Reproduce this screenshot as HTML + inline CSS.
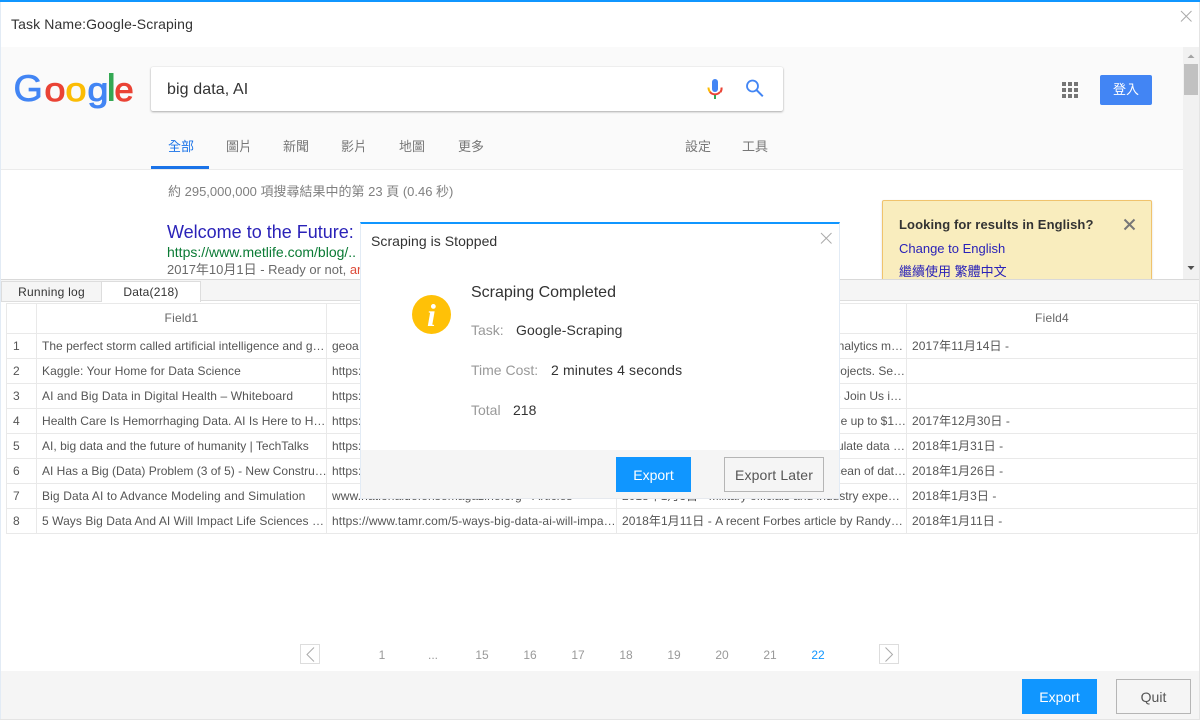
<!DOCTYPE html>
<html lang="zh-Hant">
<head>
<meta charset="utf-8">
<title>Task Name:Google-Scraping</title>
<style>
*{box-sizing:border-box}
html,body{margin:0;padding:0;width:1200px;height:720px;overflow:hidden;background:#fff}
body{font-family:"Liberation Sans","Noto Sans CJK TC",sans-serif;color:#333;position:relative}
.a{position:absolute;white-space:nowrap}
.tab{font-size:13px;color:#777;line-height:16px}
.cell{position:absolute;font-size:12px;line-height:25px;height:25px;color:#555;white-space:nowrap;overflow:hidden}
.ln{position:absolute;background:#e9e9e9}
.pg{position:absolute;top:647px;font-size:12px;line-height:16px;color:#999;width:30px;text-align:center}
.btn{position:absolute;font-size:14px;text-align:center}
</style>
</head>
<body>
<!-- window frame -->
<div class="a" style="left:0;top:0;width:1200px;height:2px;background:#1096ff"></div>
<div class="a" style="left:0;top:2px;width:1px;height:718px;background:#e2ebf5"></div>
<div class="a" style="left:1199px;top:2px;width:1px;height:718px;background:#e4e4e4"></div>
<div class="a" style="left:11px;top:16px;font-size:14px;line-height:17px;color:#333;letter-spacing:.12px">Task Name:Google-Scraping</div>
<svg class="a" style="left:1180px;top:10px" width="12" height="12" viewBox="0 0 12 12"><path d="M1 1l10.500 10.500M11.500 1L1 11.500" stroke="#aaa" stroke-width="1" fill="none"/></svg>

<!-- Google header -->
<div class="a" style="left:1px;top:47px;width:1182px;height:122px;background:#fafafa"></div>
<div class="a" style="left:1px;top:169px;width:1182px;height:1px;background:#ebebeb"></div>
<svg class="a" style="left:10px;top:65px" width="130" height="52" viewBox="0 0 130 52" font-family="Liberation Sans">
<text transform="translate(3.500 36) scale(1.02 1)" font-size="37" fill="#4285f4" stroke="#4285f4" stroke-width=".7">G</text>
<text transform="translate(34.500 36) scale(1.14 1)" font-size="33" fill="#ea4335" stroke="#ea4335" stroke-width="1">o</text>
<text transform="translate(55.500 36) scale(1.14 1)" font-size="33" fill="#fbbc05" stroke="#fbbc05" stroke-width="1">o</text>
<text transform="translate(77.500 36) scale(1.14 1)" font-size="33" fill="#4285f4" stroke="#4285f4" stroke-width="1">g</text>
<rect x="99" y="8" width="4.500" height="28" fill="#34a853"/>
<text transform="translate(104.500 36) scale(1.04 1)" font-size="33" fill="#ea4335" stroke="#ea4335" stroke-width="1">e</text>
</svg>
<div class="a" style="left:151px;top:67px;width:632px;height:44px;background:#fff;border-radius:2px;box-shadow:0 1px 2px rgba(0,0,0,.3),0 0 1px rgba(0,0,0,.15)"></div>
<div class="a" style="left:167px;top:80px;font-size:16px;line-height:19px;color:#333;letter-spacing:.1px">big data, AI</div>
<svg class="a" style="left:704px;top:76px" width="22" height="26" viewBox="0 0 22 26">
<rect x="8" y="3" width="6" height="13" rx="3" fill="#4285f4"/>
<path d="M4.500 11.500a6.500 6.500 0 0 0 2.200 5" stroke="#fbbc05" stroke-width="2" fill="none"/>
<path d="M6 16a6.500 6.500 0 0 0 10 0" stroke="#ea4335" stroke-width="2" fill="none"/>
<path d="M16.400 16.200a6.500 6.500 0 0 0 1.100-4.700" stroke="#ea4335" stroke-width="2" fill="none"/>
<rect x="10" y="19" width="2" height="4" fill="#34a853"/>
</svg>
<svg class="a" style="left:743px;top:77px" width="22" height="22" viewBox="0 0 22 22"><circle cx="9.500" cy="9" r="5.500" stroke="#4285f4" stroke-width="1.800" fill="none"/><path d="M13.500 13l6.300 6.300" stroke="#4285f4" stroke-width="2"/></svg>
<svg class="a" style="left:1062px;top:82px" width="17" height="17" viewBox="0 0 17 17" fill="#757575">
<rect x="0" y="0" width="4" height="4"/><rect x="6" y="0" width="4" height="4"/><rect x="12" y="0" width="4" height="4"/>
<rect x="0" y="6" width="4" height="4"/><rect x="6" y="6" width="4" height="4"/><rect x="12" y="6" width="4" height="4"/>
<rect x="0" y="12" width="4" height="4"/><rect x="6" y="12" width="4" height="4"/><rect x="12" y="12" width="4" height="4"/>
</svg>
<div class="a" style="left:1100px;top:75px;width:52px;height:30px;background:#4285f4;border-radius:2px;color:#fff;font-size:13px;line-height:30px;text-align:center">登入</div>

<div class="a tab" style="left:168px;top:139px;color:#1a73e8">全部</div>
<div class="a" style="left:151px;top:166px;width:58px;height:3px;background:#1a73e8"></div>
<div class="a tab" style="left:226px;top:139px">圖片</div>
<div class="a tab" style="left:283px;top:139px">新聞</div>
<div class="a tab" style="left:341px;top:139px">影片</div>
<div class="a tab" style="left:399px;top:139px">地圖</div>
<div class="a tab" style="left:458px;top:139px">更多</div>
<div class="a tab" style="left:685px;top:139px">設定</div>
<div class="a tab" style="left:742px;top:139px">工具</div>

<!-- scrollbar -->
<div class="a" style="left:1183px;top:47px;width:16px;height:232px;background:#f1f1f1"></div>
<div class="a" style="left:1184px;top:64px;width:14px;height:31px;background:#c1c1c1"></div>
<svg class="a" style="left:1183px;top:47px" width="16" height="232"><path d="M4.500 11L8 7.500 11.500 11z" fill="#a3a3a3"/><path d="M4.500 219h7L8 223z" fill="#505050"/></svg>

<!-- Google results -->
<div class="a" style="left:168px;top:184px;font-size:13px;line-height:16px;color:#808080">約 295,000,000 項搜尋結果中的第 23 頁 (0.46 秒)</div>
<div class="a" style="left:167px;top:222px;font-size:18px;line-height:20px;color:#2a22b8">Welcome to the Future: Big Data</div>
<div class="a" style="left:167px;top:244px;font-size:14px;line-height:17px;color:#0a7a34">https://www.metlife.com/blog/..</div>
<div class="a" style="left:167px;top:261px;font-size:13px;line-height:17px;color:#6a6a6a">2017年10月1日 - Ready or not, <span style="color:#dd4b39">artificial</span></div>
<div class="a" style="left:882px;top:200px;width:270px;height:90px;background:#f9edbe;border:1px solid #f0c36d;border-radius:2px;box-shadow:0 1px 2px rgba(0,0,0,.15)"></div>
<div class="a" style="left:899px;top:216px;font-size:13px;font-weight:bold;line-height:17px;color:#333;letter-spacing:.1px">Looking for results in English?</div>
<svg class="a" style="left:1123px;top:218px" width="13" height="13" viewBox="0 0 13 13"><path d="M1.500 1.500l10 10M11.500 1.500l-10 10" stroke="#777" stroke-width="2"/></svg>
<div class="a" style="left:899px;top:240px;font-size:13px;line-height:17px;color:#2a22b8">Change to English</div>
<div class="a" style="left:899px;top:263px;font-size:13px;line-height:17px;color:#2a22b8">繼續使用 繁體中文</div>

<!-- lower panel -->
<div class="a" style="left:1px;top:279px;width:1198px;height:392px;background:#fff"></div>
<div class="a" style="left:1px;top:279px;width:1198px;height:1px;background:#d9d9d9"></div>
<div class="a" style="left:1px;top:280px;width:1198px;height:21px;background:#f5f5f5;border-bottom:1px solid #ddd"></div>
<div class="a" style="left:1px;top:281px;width:101px;height:21px;border:1px solid #ddd;background:#f5f5f5;font-size:12px;line-height:20px;text-align:center;color:#333;letter-spacing:.25px">Running log</div>
<div class="a" style="left:102px;top:281px;width:99px;height:21px;border:1px solid #ddd;border-left:0;border-bottom:0;background:#fff;font-size:12px;line-height:20px;text-align:center;color:#333;letter-spacing:.2px">Data(218)</div>

<!-- table lines -->
<div class="ln" style="left:6px;top:303px;width:1192px;height:1px"></div>
<div class="ln" style="left:6px;top:333px;width:1192px;height:1px"></div>
<div class="ln" style="left:6px;top:358px;width:1192px;height:1px"></div>
<div class="ln" style="left:6px;top:383px;width:1192px;height:1px"></div>
<div class="ln" style="left:6px;top:408px;width:1192px;height:1px"></div>
<div class="ln" style="left:6px;top:433px;width:1192px;height:1px"></div>
<div class="ln" style="left:6px;top:458px;width:1192px;height:1px"></div>
<div class="ln" style="left:6px;top:483px;width:1192px;height:1px"></div>
<div class="ln" style="left:6px;top:508px;width:1192px;height:1px"></div>
<div class="ln" style="left:6px;top:533px;width:1192px;height:1px"></div>
<div class="ln" style="left:6px;top:303px;width:1px;height:231px"></div>
<div class="ln" style="left:36px;top:303px;width:1px;height:231px"></div>
<div class="ln" style="left:326px;top:303px;width:1px;height:231px"></div>
<div class="ln" style="left:616px;top:303px;width:1px;height:231px"></div>
<div class="ln" style="left:906px;top:303px;width:1px;height:231px"></div>
<div class="ln" style="left:1197px;top:303px;width:1px;height:231px"></div>

<div class="cell" style="left:37px;top:306px;width:289px;text-align:center;color:#666;letter-spacing:.2px">Field1</div>
<div class="cell" style="left:907px;top:306px;width:290px;text-align:center;color:#666;letter-spacing:.2px">Field4</div>

<div class="cell" style="left:13px;top:334px">1</div>
<div class="cell" style="left:13px;top:359px">2</div>
<div class="cell" style="left:13px;top:384px">3</div>
<div class="cell" style="left:13px;top:409px">4</div>
<div class="cell" style="left:13px;top:434px">5</div>
<div class="cell" style="left:13px;top:459px">6</div>
<div class="cell" style="left:13px;top:484px">7</div>
<div class="cell" style="left:13px;top:509px">8</div>

<div class="cell" style="left:42px;top:334px;width:284px;letter-spacing:.02px">The perfect storm called artificial intelligence and g…</div>
<div class="cell" style="left:42px;top:359px;width:284px;letter-spacing:.1px">Kaggle: Your Home for Data Science</div>
<div class="cell" style="left:42px;top:384px;width:284px;letter-spacing:.11px">AI and Big Data in Digital Health – Whiteboard</div>
<div class="cell" style="left:42px;top:409px;width:284px;letter-spacing:.04px">Health Care Is Hemorrhaging Data. AI Is Here to H…</div>
<div class="cell" style="left:42px;top:434px;width:284px;letter-spacing:.02px">AI, big data and the future of humanity | TechTalks</div>
<div class="cell" style="left:42px;top:459px;width:284px">AI Has a Big (Data) Problem (3 of 5) - New Constru…</div>
<div class="cell" style="left:42px;top:484px;width:284px;letter-spacing:.13px">Big Data AI to Advance Modeling and Simulation</div>
<div class="cell" style="left:42px;top:509px;width:284px;letter-spacing:.06px">5 Ways Big Data And AI Will Impact Life Sciences …</div>

<div class="cell" style="left:332px;top:334px">geoa</div>
<div class="cell" style="left:332px;top:359px">https://www.kaggle.com</div>
<div class="cell" style="left:332px;top:384px">https://whiteboard.com</div>
<div class="cell" style="left:332px;top:409px">https://www.wired.com</div>
<div class="cell" style="left:332px;top:434px">https://techtalks.tv</div>
<div class="cell" style="left:332px;top:459px">https://www.newconstructs.com</div>
<div class="cell" style="left:332px;top:484px;letter-spacing:.12px">www.nationaldefensemagazine.org › Articles</div>
<div class="cell" style="left:332px;top:509px;width:284px;letter-spacing:.1px">https://www.tamr.com/5-ways-big-data-ai-will-impa…</div>

<div class="cell" style="left:622px;top:334px;width:281px;text-align:right">big data analytics m…</div>
<div class="cell" style="left:622px;top:359px;width:283px;text-align:right">and code projects. Se…</div>
<div class="cell" style="left:622px;top:384px;width:280px;text-align:right">Health - Join Us i…</div>
<div class="cell" style="left:622px;top:409px;width:284px;text-align:right">could be the up to $1…</div>
<div class="cell" style="left:622px;top:434px;width:283px;text-align:right">to accumulate data …</div>
<div class="cell" style="left:622px;top:459px;width:284px;text-align:right">an ocean of dat…</div>
<div class="cell" style="left:622px;top:484px;width:284px">2018年1月3日 - Military officials and industry expe…</div>
<div class="cell" style="left:622px;top:509px;width:284px;letter-spacing:.05px">2018年1月11日 - A recent Forbes article by Randy…</div>

<div class="cell" style="left:912px;top:334px;letter-spacing:.1px">2017年11月14日 -</div>
<div class="cell" style="left:912px;top:409px;letter-spacing:.1px">2017年12月30日 -</div>
<div class="cell" style="left:912px;top:434px;letter-spacing:.1px">2018年1月31日 -</div>
<div class="cell" style="left:912px;top:459px;letter-spacing:.1px">2018年1月26日 -</div>
<div class="cell" style="left:912px;top:484px;letter-spacing:.1px">2018年1月3日 -</div>
<div class="cell" style="left:912px;top:509px;letter-spacing:.1px">2018年1月11日 -</div>

<!-- pagination -->
<svg class="a" style="left:300px;top:644px" width="21" height="21"><rect x=".5" y=".5" width="19" height="19" fill="#fff" stroke="#ddd"/><path d="M14 3.500L7 10.500 14 17.500" stroke="#aaa" fill="none"/></svg>
<div class="pg" style="left:367px">1</div>
<div class="pg" style="left:418px">...</div>
<div class="pg" style="left:467px">15</div>
<div class="pg" style="left:515px">16</div>
<div class="pg" style="left:563px">17</div>
<div class="pg" style="left:611px">18</div>
<div class="pg" style="left:659px">19</div>
<div class="pg" style="left:707px">20</div>
<div class="pg" style="left:755px">21</div>
<div class="pg" style="left:803px;color:#1096ff">22</div>
<svg class="a" style="left:879px;top:644px" width="21" height="21"><rect x=".5" y=".5" width="19" height="19" fill="#fff" stroke="#ddd"/><path d="M6.500 3.500L13.500 10.500 6.500 17.500" stroke="#aaa" fill="none"/></svg>

<!-- footer -->
<div class="a" style="left:1px;top:671px;width:1198px;height:48px;background:#f5f5f5"></div>
<div class="a" style="left:0;top:719px;width:1200px;height:1px;background:#e4e4e4"></div>
<div class="btn" style="left:1022px;top:679px;width:75px;height:35px;line-height:36px;background:#1096ff;color:#fff">Export</div>
<div class="btn" style="left:1116px;top:679px;width:75px;height:35px;line-height:35px;border:1px solid #b5b5b5;color:#555">Quit</div>

<!-- modal -->
<div class="a" style="left:360px;top:222px;width:480px;height:277px;background:#fff;border:1px solid #e2ebf5;border-top:2px solid #1096ff;border-bottom:1px solid #e6e9ee"></div>
<div class="a" style="left:371px;top:233px;font-size:14px;line-height:17px;color:#333;letter-spacing:.05px">Scraping is Stopped</div>
<svg class="a" style="left:820px;top:232px" width="12" height="12" viewBox="0 0 12 12"><path d="M1 1l10.500 10.500M11.500 1L1 11.500" stroke="#aaa" fill="none"/></svg>
<svg class="a" style="left:412px;top:295px" width="39" height="39" viewBox="0 0 39 39" font-family="Liberation Serif"><circle cx="19.500" cy="19.500" r="19.500" fill="#ffc107"/><text x="19.500" y="31" font-size="32" font-style="italic" font-weight="bold" fill="#fff" text-anchor="middle">i</text></svg>
<div class="a" style="left:471px;top:283px;font-size:16px;line-height:19px;color:#333">Scraping Completed</div>
<div class="a" style="left:471px;top:322px;font-size:14px;line-height:17px;color:#999">Task:</div>
<div class="a" style="left:516px;top:322px;font-size:14px;line-height:17px;color:#333;letter-spacing:.1px">Google-Scraping</div>
<div class="a" style="left:471px;top:362px;font-size:14px;line-height:17px;color:#999">Time Cost:</div>
<div class="a" style="left:551px;top:362px;font-size:14px;line-height:17px;color:#333;letter-spacing:.15px">2 minutes 4 seconds</div>
<div class="a" style="left:471px;top:402px;font-size:14px;line-height:17px;color:#999">Total</div>
<div class="a" style="left:513px;top:402px;font-size:14px;line-height:17px;color:#333">218</div>
<div class="a" style="left:361px;top:450px;width:478px;height:48px;background:#f5f5f5"></div>
<div class="btn" style="left:616px;top:457px;width:75px;height:35px;line-height:36px;background:#1096ff;color:#fff">Export</div>
<div class="btn" style="left:724px;top:457px;width:100px;height:35px;line-height:35px;border:1px solid #b5b5b5;color:#555;letter-spacing:.15px">Export Later</div>
</body>
</html>
